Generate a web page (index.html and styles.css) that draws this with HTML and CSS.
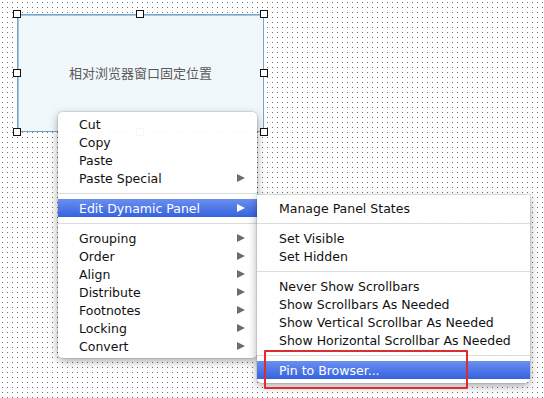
FILE: index.html
```html
<!DOCTYPE html>
<html>
    <head>
        <meta charset="UTF-8">
        <title>Pin to Browser</title>
        <link rel="stylesheet" href="styles.css">
    </head>
    <body>
        <main class="canvas">
            <div class="panel">
                <span class="panel-label">相对浏览器窗口固定位置</span>
                <i class="handle nw"></i><i class="handle n"></i><i class="handle ne"></i>
                <i class="handle w"></i><i class="handle e"></i>
                <i class="handle sw"></i><i class="handle s"></i><i class="handle se"></i>
            </div>

            <ul class="menu main-menu">
                <li>Cut</li>
                <li>Copy</li>
                <li>Paste</li>
                <li class="sub">Paste Special</li>
                <li class="sep"></li>
                <li class="sub active">Edit Dynamic Panel</li>
                <li class="sep"></li>
                <li class="sub">Grouping</li>
                <li class="sub">Order</li>
                <li class="sub">Align</li>
                <li class="sub">Distribute</li>
                <li class="sub">Footnotes</li>
                <li class="sub">Locking</li>
                <li class="sub">Convert</li>
            </ul>

            <ul class="menu sub-menu">
                <li>Manage Panel States</li>
                <li class="sep"></li>
                <li>Set Visible</li>
                <li>Set Hidden</li>
                <li class="sep"></li>
                <li>Never Show Scrollbars</li>
                <li>Show Scrollbars As Needed</li>
                <li>Show Vertical Scrollbar As Needed</li>
                <li>Show Horizontal Scrollbar As Needed</li>
                <li class="sep"></li>
                <li class="active">Pin to Browser...</li>
            </ul>

            <div class="callout"></div>
        </main>
    </body>
</html>
```

FILE: styles.css
```css
:root {
    --dot-color: #6e6e6e;
    --panel-fill: #f1f8fb;
    --panel-border: #76a3c6;
    --menu-text: #111;
    --arrow-color: #6c6c6c;
    --highlight-top: #6a8ff0;
    --highlight-bottom: #3563e0;
    --separator: #dcdcdc;
    --callout: #dd2c2c;
    --row-height: 18px;
}

* {
    box-sizing: border-box;
}

body {
    margin: 0;
    width: 544px;
    height: 398px;
    overflow: hidden;
    background-color: #fff;
    /* one dark pixel per 5px tile: white columns over a dark bottom row */
    background-image:
        linear-gradient(to right, #fff 4px, transparent 4px),
        linear-gradient(to bottom, transparent 4px, var(--dot-color) 4px);
    background-size: 5px 5px;
    background-position: -2px -2px;
    font-family: "DejaVu Sans", "Liberation Sans", sans-serif;
}

.canvas {
    position: relative;
    width: 544px;
    height: 398px;
}

.panel {
    position: absolute;
    left: 17px;
    top: 14px;
    width: 247px;
    height: 118px;
    background-color: var(--panel-fill);
    border: 1px solid var(--panel-border);
    box-shadow: inset 1px 1px 0 #a9c8de;
    display: flex;
    align-items: center;
    justify-content: center;
}

.panel-label {
    font-family: "Noto Sans CJK SC", sans-serif;
    font-size: 13px;
    color: #5a5a5a;
    margin-bottom: 2px;
}

.handle {
    position: absolute;
    width: 8px;
    height: 8px;
    background: #fff;
    border: 1px solid #111;
}

.nw { left: -5px; top: -5px; }
.n { left: 118px; top: -5px; }
.ne { right: -5px; top: -5px; }
.w { left: -5px; top: 54px; }
.e { right: -5px; top: 54px; }
.sw { left: -5px; bottom: -5px; }
.s { left: 118px; bottom: -5px; }
.se { right: -5px; bottom: -5px; }

.menu {
    position: absolute;
    margin: 0;
    list-style: none;
    background-color: rgba(255, 255, 255, 0.97);
    border-radius: 0 0 5px 5px;
    box-shadow: 0 3px 10px rgba(0, 0, 0, 0.35), 0 0 0 1px rgba(0, 0, 0, 0.08);
    font-size: 12.5px;
    color: var(--menu-text);
}

.main-menu {
    left: 58px;
    top: 112px;
    width: 199px;
    padding: 3px 0;
    border-radius: 5px;
}

.sub-menu {
    left: 257px;
    top: 195px;
    width: 273px;
    padding: 4px 0;
}

.menu li {
    height: var(--row-height);
    line-height: 17px;
    padding-top: 1px;
    padding-left: 21px;
    position: relative;
    white-space: nowrap;
}

.sub-menu li {
    padding-left: 22px;
}

.menu li.sep {
    height: 12px;
    display: flex;
    align-items: center;
    padding: 0;
}

.menu li.sep::before {
    content: "";
    flex: 1;
    height: 1px;
    background-color: var(--separator);
}

.menu li.sub::after {
    content: "";
    position: absolute;
    right: 12px;
    top: 5px;
    border-left: 8px solid var(--arrow-color);
    border-top: 4.5px solid transparent;
    border-bottom: 4.5px solid transparent;
}

.menu li.active {
    color: #fff;
    background: linear-gradient(var(--highlight-top), var(--highlight-bottom));
}

.menu li.active::after {
    border-left-color: #fff;
}

.callout {
    position: absolute;
    left: 264px;
    top: 350px;
    width: 204px;
    height: 39px;
    border: 2px solid var(--callout);
    border-radius: 1px;
}
```
